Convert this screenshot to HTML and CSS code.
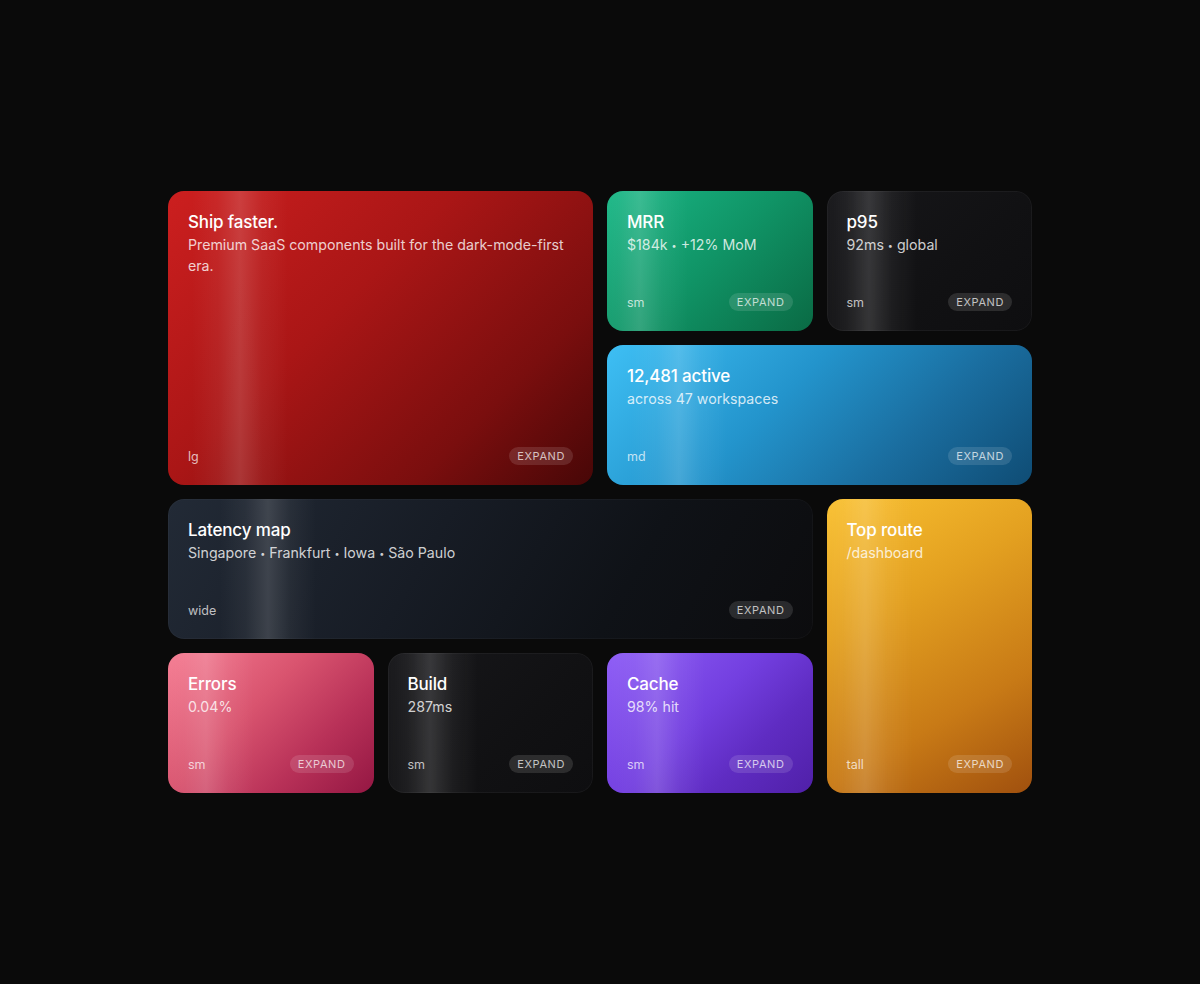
FILE: index.html
```html
<!DOCTYPE html>
<html lang="en">
<head>
<meta charset="utf-8">
<title>Bento</title>
<link rel="stylesheet" href="styles.css">
</head>
<body>
<main class="bento">
  <section class="card card-lg red">
    <div class="card-body">
      <h2 class="card-title">Ship faster.</h2>
      <p class="card-sub">Premium SaaS components built for the dark-mode-first era.</p>
    </div>
    <div class="card-foot"><span class="size">lg</span><span class="pill">Expand</span></div>
  </section>
  <section class="card green">
    <div class="card-body">
      <h2 class="card-title">MRR</h2>
      <p class="card-sub">$184k <span class="dot">•</span> +12% MoM</p>
    </div>
    <div class="card-foot"><span class="size">sm</span><span class="pill">Expand</span></div>
  </section>
  <section class="card dark p95">
    <div class="card-body">
      <h2 class="card-title">p95</h2>
      <p class="card-sub">92ms <span class="dot">•</span> global</p>
    </div>
    <div class="card-foot"><span class="size">sm</span><span class="pill">Expand</span></div>
  </section>
  <section class="card card-md blue">
    <div class="card-body">
      <h2 class="card-title">12,481 active</h2>
      <p class="card-sub">across 47 workspaces</p>
    </div>
    <div class="card-foot"><span class="size">md</span><span class="pill">Expand</span></div>
  </section>
  <section class="card card-wide slate">
    <div class="card-body">
      <h2 class="card-title">Latency map</h2>
      <p class="card-sub">Singapore <span class="dot">•</span> Frankfurt <span class="dot">•</span> Iowa <span class="dot">•</span> São Paulo</p>
    </div>
    <div class="card-foot"><span class="size">wide</span><span class="pill">Expand</span></div>
  </section>
  <section class="card card-tall amber">
    <div class="card-body">
      <h2 class="card-title">Top route</h2>
      <p class="card-sub">/dashboard</p>
    </div>
    <div class="card-foot"><span class="size">tall</span><span class="pill">Expand</span></div>
  </section>
  <section class="card rose">
    <div class="card-body">
      <h2 class="card-title">Errors</h2>
      <p class="card-sub">0.04%</p>
    </div>
    <div class="card-foot"><span class="size">sm</span><span class="pill">Expand</span></div>
  </section>
  <section class="card dark build">
    <div class="card-body">
      <h2 class="card-title">Build</h2>
      <p class="card-sub">287ms</p>
    </div>
    <div class="card-foot"><span class="size">sm</span><span class="pill">Expand</span></div>
  </section>
  <section class="card violet">
    <div class="card-body">
      <h2 class="card-title">Cache</h2>
      <p class="card-sub">98% hit</p>
    </div>
    <div class="card-foot"><span class="size">sm</span><span class="pill">Expand</span></div>
  </section>
</main>
</body>
</html>
```
FILE: styles.css
```css
* { box-sizing: border-box; }
html, body { margin: 0; padding: 0; }
body {
  background: #0a0a0a;
  font-family: Inter, "Noto Sans", sans-serif;
  color: #fff;
  min-height: 984px;
  display: flex;
  align-items: center;
  justify-content: center;
}
.bento {
  width: 864px;
  display: grid;
  grid-template-columns: repeat(4, 1fr);
  grid-template-rows: repeat(4, 140px);
  gap: 14px;
}
.card {
  --s: 40px;
  --shine: linear-gradient(90deg,
    rgba(255,255,255,0) calc(var(--s) - 48px),
    rgba(255,255,255,0.05) calc(var(--s) - 22px),
    rgba(255,255,255,0.15) var(--s),
    rgba(255,255,255,0.05) calc(var(--s) + 22px),
    rgba(255,255,255,0) calc(var(--s) + 48px));
  border-radius: 16px;
  padding: 20px;
  display: flex;
  flex-direction: column;
  justify-content: space-between;
  overflow: hidden;
}
.card-lg { grid-column: 1 / 3; grid-row: 1 / 3; }
.card-md { grid-column: 3 / 5; grid-row: 2; }
.card-wide { grid-column: 1 / 4; grid-row: 3; }
.card-tall { grid-column: 4; grid-row: 3 / 5; }

.card-title {
  margin: 0;
  font-size: 17px;
  line-height: 22px;
  font-weight: 500;
  letter-spacing: -0.15px;
}
.card-sub {
  margin: 1px 0 0;
  font-size: 14.2px;
  line-height: 21px;
  font-weight: 400;
  color: rgba(255,255,255,0.8);
}
.dot {
  font-size: 9px;
  vertical-align: 1px;
}
.card-foot {
  display: flex;
  align-items: center;
  justify-content: space-between;
}
.size {
  font-size: 12.5px;
  color: rgba(255,255,255,0.72);
}
.pill {
  font-size: 11px;
  line-height: 18px;
  height: 18px;
  padding: 0 8px;
  border-radius: 999px;
  text-transform: uppercase;
  letter-spacing: 0.6px;
  background: rgba(255,255,255,0.12);
  color: rgba(255,255,255,0.72);
}

.red { --s: 72px; background: var(--shine), linear-gradient(135deg, #cc1f1f 0%, #aa1616 40%, #7a0e0e 75%, #470707 100%); }
.green { --s: 33px; background: var(--shine), linear-gradient(135deg, #1ab786 0%, #109466 50%, #0a6a44 100%); }
.dark { box-shadow: inset 0 0 0 1px rgba(255,255,255,0.045); background: var(--shine), linear-gradient(135deg, #17171a 0%, #111113 60%, #0e0e10 100%); }
.p95 { --s: 42px; }
.build { --s: 42px; }
.blue { --s: 72px; background: var(--shine), linear-gradient(135deg, #3ebff4 0%, #2394cc 40%, #1a6d9f 70%, #0f4c74 100%); }
.slate { --s: 100px; box-shadow: inset 0 0 0 1px rgba(255,255,255,0.03); background: var(--shine), linear-gradient(120deg, #222a36 0%, #171c25 40%, #0f1217 70%, #0c0c0e 100%); }
.rose { --s: 38px; background: var(--shine), linear-gradient(135deg, #f57c92 0%, #d9546f 40%, #b83158 70%, #941743 100%); }
.violet { --s: 50px; background: var(--shine), linear-gradient(135deg, #8f5ff6 0%, #733fe0 45%, #5f2cc2 70%, #5020a8 100%); }
.amber { --s: 38px; background: var(--shine), linear-gradient(150deg, #f9c030 0%, #e3a020 35%, #c87a16 70%, #a0500e 100%); }
```
